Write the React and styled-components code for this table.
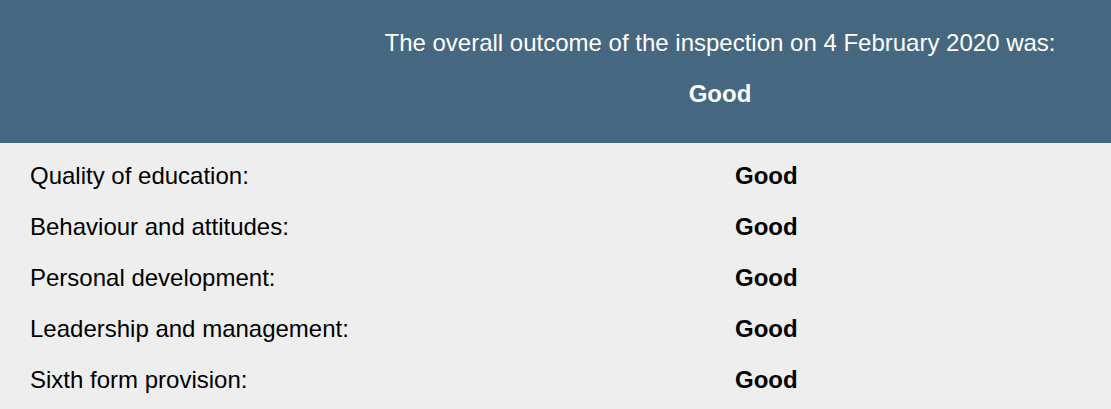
import React from 'react'
import styled, { createGlobalStyle } from 'styled-components'

const GlobalStyle = createGlobalStyle`
    body {
        margin: 0;
        background: #eeeeee;
        font-family: "Liberation Sans", Arial, sans-serif;
    }
`

const ratings = [
    { label: 'Quality of education:', grade: 'Good' },
    { label: 'Behaviour and attitudes:', grade: 'Good' },
    { label: 'Personal development:', grade: 'Good' },
    { label: 'Leadership and management:', grade: 'Good' },
    { label: 'Sixth form provision:', grade: 'Good' },
]

const App = () => {
    return (
        <Page>
            <GlobalStyle />
            <Outcome>
                <div className="summary">
                    <p>The overall outcome of the inspection on 4 February 2020 was:</p>
                    <strong>Good</strong>
                </div>
            </Outcome>
            <Judgements>
                {ratings.map((r) => (
                    <Row key={r.label}>
                        <span>{r.label}</span>
                        <Grade>{r.grade}</Grade>
                    </Row>
                ))}
            </Judgements>
        </Page>
    )
}

const Page = styled.div`
    width: 1111px;
    min-height: 409px;
    background: #eeeeee;
`

const Outcome = styled.header`
    background: #456880;
    color: #ffffff;
    padding: 18px 0 24px 329px;
    .summary {
        text-align: center;
        font-size: 24px;
        line-height: 50px;
        p {
            margin: 0;
        }
        strong {
            display: block;
            font-weight: bold;
            margin-top: 1px;
        }
    }
`

const Judgements = styled.section`
    padding: 7px 0 4px 30px;
    color: #000000;
`

const Row = styled.div`
    display: grid;
    grid-template-columns: 705px 1fr;
    font-size: 24px;
    line-height: 51px;
`

const Grade = styled.strong`
    font-weight: bold;
`

export default App
